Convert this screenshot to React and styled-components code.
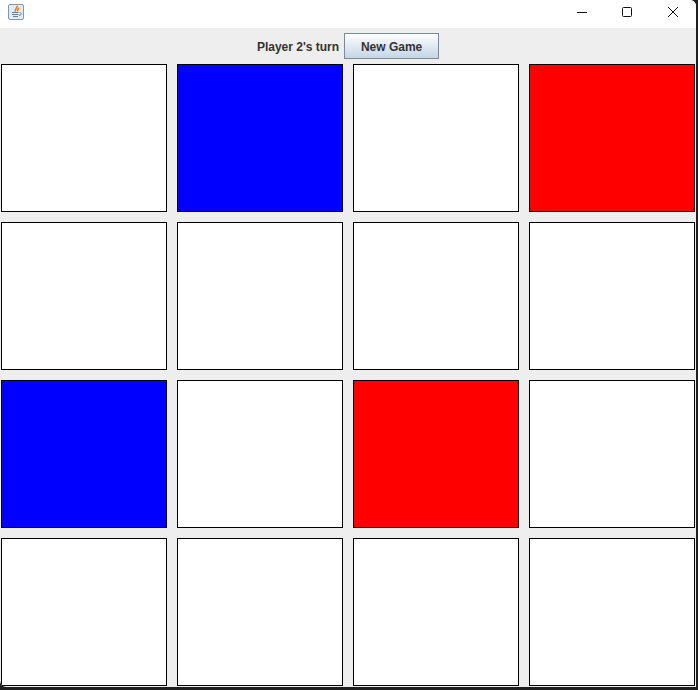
import React from "react";
import styled, { createGlobalStyle } from "styled-components";

const Global = createGlobalStyle`
  html, body { margin: 0; padding: 0; background: #1f1f1f; }
  * { box-sizing: border-box; }
`;

const Frame = styled.div`
  width: 698px;
  height: 690px;
  background: #1f1f1f;
  padding: 0 2px 3px 0;
  overflow: hidden;
`;

const Window = styled.div`
  width: 696px;
  height: 687px;
  background: #eeeeee;
  border-radius: 0 6px 0 6px;
  overflow: hidden;
`;

const TitleBar = styled.div`
  height: 28px;
  background: #ffffff;
  display: flex;
  align-items: center;
  justify-content: space-between;
`;

const AppIcon = styled.svg`
  width: 16px;
  height: 16px;
  margin-left: 8px;
  margin-top: -4px;
`;

const Controls = styled.div`
  display: flex;
  height: 24px;
  margin-top: -4px;
`;

const ControlButton = styled.div`
  width: 46px;
  height: 24px;
  display: flex;
  align-items: center;
  justify-content: center;
`;

const MinimizeGlyph = styled.svg`
  margin-left: 2px;
`;

const Toolbar = styled.div`
  height: 36px;
  display: flex;
  align-items: center;
  justify-content: center;
  gap: 5px;
  font: bold 12px "Liberation Sans", Arial, sans-serif;
  color: #333333;
`;

const TurnLabel = styled.span`
  white-space: nowrap;
  padding-top: 2px;
`;

const NewGameButton = styled.button`
  width: 95px;
  height: 26px;
  padding: 2px 0 0;
  border: 1px solid #7a8a99;
  background: linear-gradient(#ffffff 0%, #e3ebf3 45%, #c5d6e6 100%);
  font: inherit;
  color: #333333;
`;

const Board = styled.div`
  display: grid;
  grid-template-columns: repeat(4, 166px);
  grid-template-rows: repeat(4, 148px);
  gap: 10px;
  padding-left: 1px;
`;

const Cell = styled.div`
  border: 1px solid #000000;
  background: ${(p) => p.$color};
`;

const cells = [
  "#ffffff", "#0000ff", "#ffffff", "#ff0000",
  "#ffffff", "#ffffff", "#ffffff", "#ffffff",
  "#0000ff", "#ffffff", "#ff0000", "#ffffff",
  "#ffffff", "#ffffff", "#ffffff", "#ffffff",
];

export default function App() {
  return (
    <>
      <Global />
      <Frame>
        <Window>
          <TitleBar>
            <AppIcon viewBox="0 0 16 16">
              <rect x="0.5" y="0.5" width="15" height="15" rx="1.5" fill="#e4ebf2" stroke="#7f97ad" />
              <path d="M8.8 1.8c1.6 1.8-2.6 3-1.4 5.8M10.4 3.6c.8 1.2-1.4 2.2-.8 3.8" fill="none" stroke="#ee7a14" strokeWidth="1.6" />
              <path d="M4 8.5h6.5M4 10.5h6.5M5 12.5h5" stroke="#5f7f9c" strokeWidth="1" />
              <path d="M11.5 8.5c2.4 0 2.4 2.6-.5 3" fill="none" stroke="#5f7f9c" strokeWidth="1" />
            </AppIcon>
            <Controls>
              <ControlButton>
                <MinimizeGlyph width="10" height="10" viewBox="0 0 10 10">
                  <path d="M0 5.5h10" stroke="#111111" strokeWidth="1" />
                </MinimizeGlyph>
              </ControlButton>
              <ControlButton>
                <svg width="10" height="10" viewBox="0 0 10 10">
                  <rect x="0.5" y="0.5" width="9" height="9" rx="1" fill="none" stroke="#111111" strokeWidth="1" />
                </svg>
              </ControlButton>
              <ControlButton>
                <svg width="10" height="10" viewBox="0 0 10 10">
                  <path d="M0 0l10 10M10 0L0 10" stroke="#111111" strokeWidth="1" />
                </svg>
              </ControlButton>
            </Controls>
          </TitleBar>
          <Toolbar>
            <TurnLabel>Player 2's turn</TurnLabel>
            <NewGameButton>New Game</NewGameButton>
          </Toolbar>
          <Board>
            {cells.map((color, i) => (
              <Cell key={i} $color={color} />
            ))}
          </Board>
        </Window>
      </Frame>
    </>
  );
}
